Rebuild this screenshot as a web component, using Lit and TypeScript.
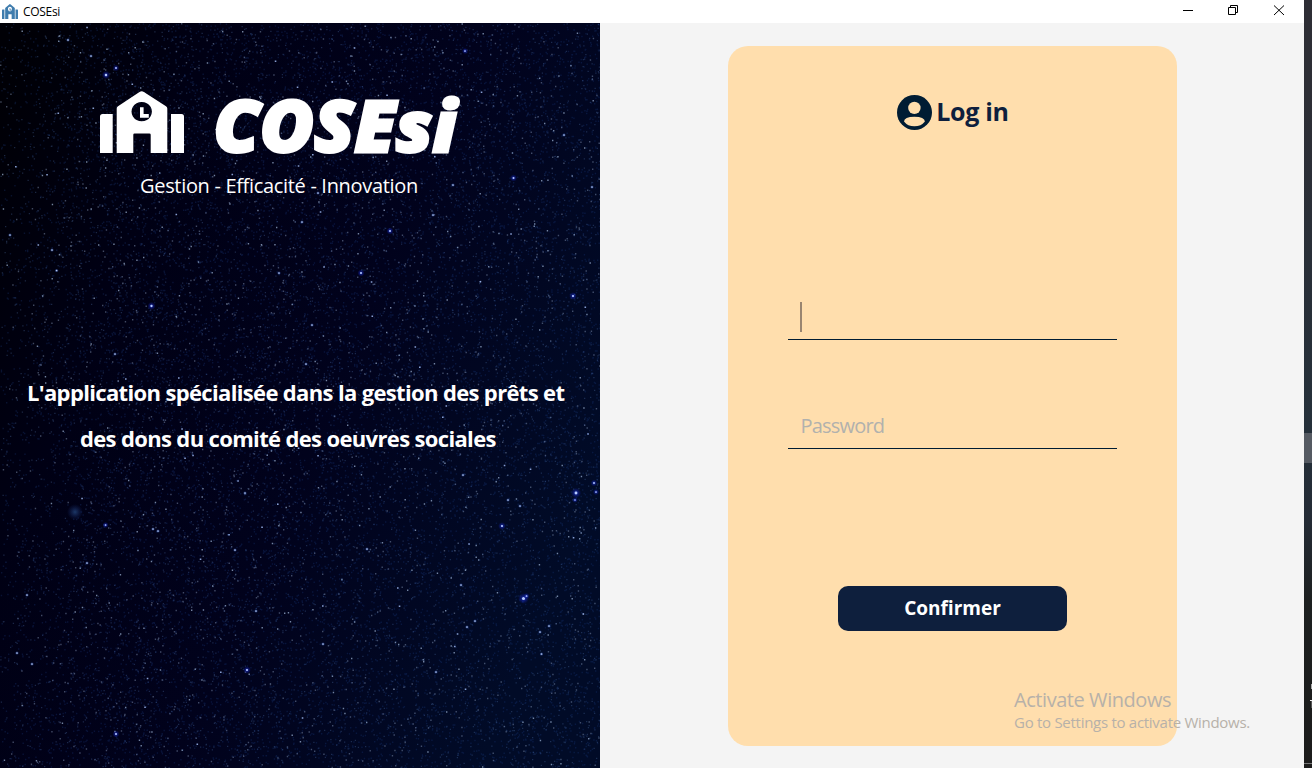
import { LitElement, html, css, svg } from "lit";
import { customElement } from "lit/decorators.js";

const SKY_W = 600;
const SKY_H = 745;

/** Small seeded generator, so the sky is the same on each load. */
function rng(seed: number) {
  let s = seed >>> 0;
  return () => {
    s = (s + 0x6d2b79f5) >>> 0;
    let t = s;
    t = Math.imul(t ^ (t >>> 15), t | 1);
    t ^= t + Math.imul(t ^ (t >>> 7), t | 61);
    return ((t ^ (t >>> 14)) >>> 0) / 4294967296;
  };
}

function scatter(seed: number, count: number, size: number) {
  const r = rng(seed);
  let d = "";
  for (let i = 0; i < count; i++) {
    const x = Math.round(r() * SKY_W * 4) / 4;
    const y = Math.round(r() * SKY_H * 4) / 4;
    if (x < 110 && r() < 0.6 * (1 - x / 110)) continue;
    d += `M${x} ${y}h${size}v${size}h-${size}z`;
  }
  return d;
}

const layers = [
  { d: scatter(11, 16000, 1.4), fill: "#1c3b80", o: 0.3 },
  { d: scatter(23, 5500, 1.3), fill: "#4c6ba4", o: 0.36 },
  { d: scatter(31, 1700, 1.4), fill: "#8598ba", o: 0.48 },
  { d: scatter(47, 360, 1.4), fill: "#a8bfe2", o: 0.68 },
  { d: scatter(59, 70, 1.6), fill: "#a9c4ff", o: 0.8 },
];

/* x, y, radius of the stars that stand out */
const bright: [number, number, number][] = [
  [106, 52, 1.7], [116, 45, 1.3], [151.5, 283, 1.6], [361, 250, 1.4], [390, 208, 1.4],
  [513.5, 155, 1.4], [465, 28, 1.2], [573, 273, 1.5], [576, 470, 2], [575, 477, 1.1],
  [594, 460, 1.3], [596, 469, 1.2], [502, 503, 1.5], [523.5, 575.5, 2.1],
  [526.5, 573, 1.2], [247, 647, 1.5], [116, 711, 1.4], [105.6, 502, 1.2],
];

const medium: [number, number][] = [
  [463, 452], [245, 470], [87, 540], [27, 572], [540, 609], [541.5, 631], [56.6, 247.5],
  [318, 170], [592, 164], [453, 162], [302, 199], [433, 192], [68, 17], [91, 33], [564, 112],
  [312, 302], [306, 341], [235, 527], [17, 630], [32, 641], [279, 250], [256, 588], [323, 621],
  [436, 649], [367, 526], [10, 212], [153, 506], [158, 508], [52, 227], [115, 331], [461, 562],
  [475, 598], [467, 604], [508, 477], [520, 483], [549, 603],
];

@customElement("night-sky")
class NightSky extends LitElement {
  static styles = css`
    :host { display: block; width: 100%; height: 100%; }
    .sky { display: block; }
  `;
  render() {
    return html`<svg class="sky" width="600" height="745" viewBox="0 0 600 745">
      <defs>
        <linearGradient id="base" x1="0" y1="0.1" x2="1" y2="0.6">
          <stop offset="0" stop-color="#000006"></stop>
          <stop offset="0.25" stop-color="#000014"></stop>
          <stop offset="0.6" stop-color="#01021c"></stop>
          <stop offset="1" stop-color="#010b27"></stop>
        </linearGradient>
        <radialGradient id="halo">
          <stop offset="0" stop-color="#2a40f0" stop-opacity="0.75"></stop>
          <stop offset="1" stop-color="#1020c0" stop-opacity="0"></stop>
        </radialGradient>
        <radialGradient id="cluster">
          <stop offset="0" stop-color="#3a70b8" stop-opacity="0.5"></stop>
          <stop offset="1" stop-color="#2040a0" stop-opacity="0"></stop>
        </radialGradient>
      </defs>
      <rect width="600" height="745" fill="url(#base)"></rect>
      ${layers.map((l) => svg`<path d=${l.d} fill=${l.fill} opacity=${l.o}></path>`)}
      <circle cx="75" cy="489" r="8" fill="url(#cluster)"></circle>
      ${medium.map(
        ([x, y]) => svg`<circle cx=${x} cy=${y} r="1.6" fill="#3f63c8" opacity="0.45"></circle>
          <circle cx=${x} cy=${y} r="0.85" fill="#b5c8ee"></circle>`
      )}
      ${bright.map(
        ([x, y, r]) => svg`<circle cx=${x} cy=${y} r=${r * 2.6} fill="url(#halo)"></circle>
          <circle cx=${x} cy=${y} r=${r * 0.72} fill="#b8ccff"></circle>`
      )}
    </svg>`;
  }
}

const school = svg`
  <path d="M2.5 23H12.7V62H0V25.5Q0 23 2.5 23z"></path>
  <path fill-rule="evenodd" d="M16.7 62V17.4Q16.7 16 18 15.2L39.5 1Q41.7 -.5 43.9 1L66 15.2Q67.3 16 67.3 17.4V62H50.7V43.8Q50.7 42.5 49.4 42.5H34.6Q33.3 42.5 33.3 43.8V62zM41.7 10.9a10.2 9.7 0 1 0 .01 0z"></path>
  <path d="M71 23H81.5Q84 23 84 25.5V62H71z"></path>
  <path d="M40 16.2h3.6v6.8h5.2v3.8H40z"></path>`;

@customElement("app-root")
class AppRoot extends LitElement {
  static styles = css`
    :host {
      display: block;
      width: 1312px;
      height: 768px;
      overflow: hidden;
      position: relative;
      font-family: "Open Sans", "Noto Sans", sans-serif;
      background: #f4f4f4;
    }
    .screen { display: flex; height: 100%; }
    .window { width: 1304px; display: flex; flex-direction: column; }
    .titlebar { height: 23px; background: #fff; display: flex; align-items: center; }
    .appicon { margin-left: 2px; fill: #3f7cad; }
    .title { margin-left: 5px; font-size: 12px; line-height: 22px; letter-spacing: -0.3px; color: #000; flex: 1; }
    .winbtns { display: block; }
    .body { flex: 1; display: flex; }
    .left { width: 600px; display: grid; color: #fff; }
    .left > * { grid-area: 1 / 1; min-width: 0; }
    .intro { z-index: 1; display: flex; flex-direction: column; align-items: flex-start; }
    .brand { display: block; margin: 68px 0 0 100px; overflow: visible; }
    .wordmark { font: italic 800 70px/1 "Open Sans"; stroke: #fff; stroke-width: 2.8px; stroke-linejoin: miter; }
    .tagline { margin: 0 0 0 140px; font-size: 20px; line-height: 40px; letter-spacing: -0.32px; white-space: nowrap; }
    .pitch { margin: 163px 0 0; font-size: 22px; line-height: 46px; font-weight: 700; letter-spacing: -0.65px; white-space: nowrap; }
    .l1 { padding-left: 27px; }
    .l2 { padding-left: 80px; }
    .right { flex: 1; display: flex; justify-content: center; padding-top: 23px; }
    .card {
      width: 449px; height: 700px; box-sizing: border-box; border-radius: 20px;
      background: #ffdead; display: flex; flex-direction: column; align-items: center;
      padding-top: 46px;
    }
    .login { display: flex; align-items: center; gap: 4px; height: 40px; padding-left: 2px; color: #0e1f3d;
      font-size: 25px; font-weight: 700; line-height: 40px; letter-spacing: -0.3px; white-space: nowrap; }
    .login-text { margin-top: -1px; line-height: 39px; }
    .field { width: 329px; box-sizing: border-box; border-bottom: 1px solid #001c33;
      display: flex; align-items: center; padding-left: 13px; height: 46px; }
    .user { margin-top: 162px; padding-left: 12px; }
    .caret { width: 2px; height: 30px; background: #998570; }
    .pass { margin-top: 63px; color: #b1b1ad; font-size: 20px; line-height: 44px; letter-spacing: -0.8px; }
    .confirm { margin-top: 137px; width: 229px; height: 45px; border: 0; border-radius: 10px; padding: 0 0 0 1px;
      background: #0e1f3d; color: #fff; font: 700 19px/45px "Open Sans", sans-serif; }
    .edge { width: 8px; display: flex; flex-direction: column;
      background: linear-gradient(#2e2e35 0, #2d2e35 90px, #25303a 430px, #242b35 520px, #1d2020 600px, #1c1c1b 100%); }
    .thumb { margin-top: 433px; height: 30px; background: #555a62; }
    .bits { display: block; margin-top: 217px; }
    .notice { position: absolute; left: 1014px; top: 687px; color: #b7b1a9; white-space: nowrap; }
    .n1 { font-size: 20px; line-height: 26px; letter-spacing: -0.44px; }
    .n2 { font-size: 15px; line-height: 18px; letter-spacing: -0.28px; }
  `;

  render() {
    return html`
      <div class="screen">
        <div class="window">
          <div class="titlebar">
            <svg class="appicon" width="16" height="15" viewBox="0 0 84 62" preserveAspectRatio="none">${school}</svg>
            <span class="title">COSEsi</span>
            <svg class="winbtns" width="144" height="23" viewBox="1160 0 144 23" fill="none" stroke="#000" stroke-width="1">
              <path d="M1183 10.5h10M1228.5 7.5h7v7h-7zM1230.5 7.5v-2h7v7h-2M1274 5.5l10 9.5M1284 5.5l-10 9.5"></path>
            </svg>
          </div>
          <div class="body">
            <div class="left">
              <night-sky></night-sky>
              <div class="intro">
                <svg class="brand" width="400" height="75" viewBox="0 0 400 75" fill="#fff">
                  ${school}
                  <text class="wordmark" x="113.5" y="60.6" textLength="243" lengthAdjust="spacingAndGlyphs">COSEsi</text>
                </svg>
                <div class="tagline">Gestion - Efficacité - Innovation</div>
                <div class="pitch">
                  <div class="l1">L'application spécialisée dans la gestion des prêts et</div>
                  <div class="l2">des dons du comité des oeuvres sociales</div>
                </div>
              </div>
            </div>
            <div class="right">
              <div class="card">
                <div class="login">
                  <svg width="35" height="35" viewBox="0 0 35 35">
                    <circle cx="17.5" cy="17.5" r="17.5" fill="#001c33"></circle>
                    <circle cx="17.4" cy="12.9" r="6.2" fill="#ffdead"></circle>
                    <path d="M7 26.4Q7.2 21.7 17.4 21.7Q27.6 21.7 27.9 26.4Q24.1 31.3 17.4 31.3Q10.8 31.3 7 26.4z" fill="#ffdead"></path>
                  </svg>
                  <span class="login-text">Log in</span>
                </div>
                <div class="field user"><span class="caret"></span></div>
                <div class="field pass"><span class="pass-text">Password</span></div>
                <button class="confirm">Confirmer</button>
              </div>
            </div>
          </div>
        </div>
        <div class="edge">
          <div class="thumb"></div>
          <svg class="bits" width="8" height="88" viewBox="0 0 8 88">
            <path d="M7 4h1v5h-1z" fill="#aaa"></path>
            <path d="M6 20h2v1h-2z" fill="#eee"></path>
            <path d="M7 21h1v7h-1z" fill="#555"></path>
            <path d="M0 83h8v1h-8z" fill="#777"></path>
          </svg>
        </div>
      </div>
      <div class="notice">
        <div class="n1">Activate Windows</div>
        <div class="n2">Go to Settings to activate Windows.</div>
      </div>
    `;
  }
}
